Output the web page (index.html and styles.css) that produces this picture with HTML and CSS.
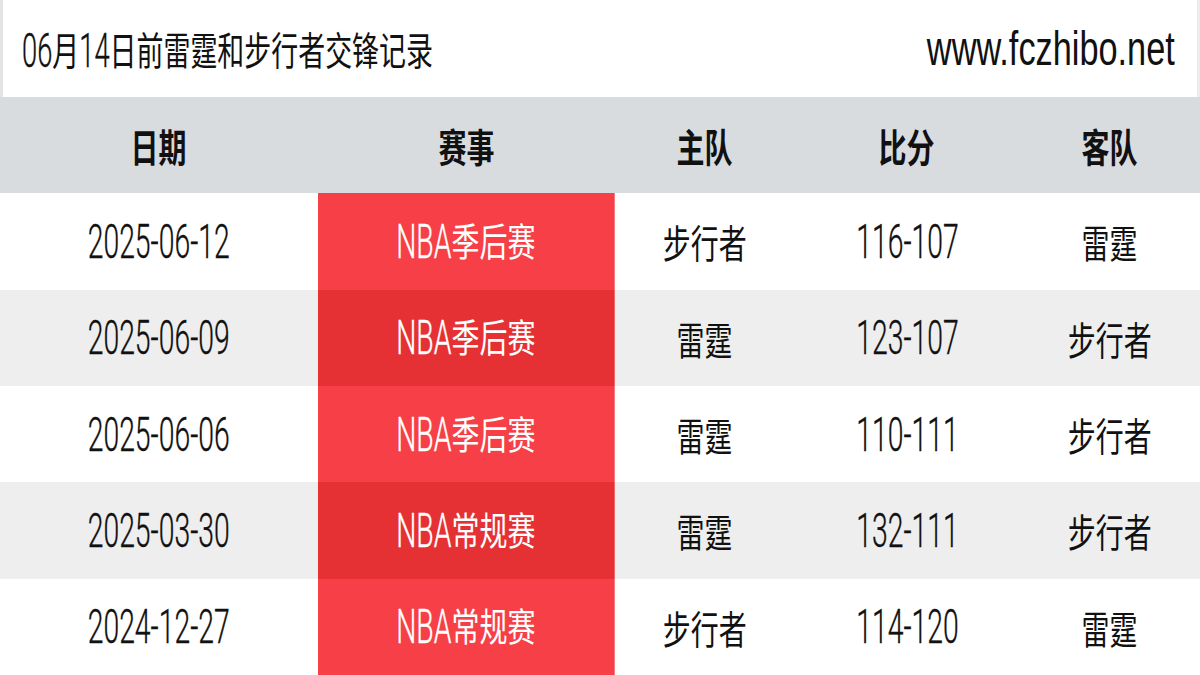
FILE: index.html
```html
<!DOCTYPE html>
<html lang="zh-CN">
<head>
<meta charset="utf-8">
<title>06月14日前雷霆和步行者交锋记录</title>
<link rel="stylesheet" href="styles.css">
</head>
<body>
<div class="page">
  <div class="title-bar">
    <span class="t title"><span class="n">06</span>月<span class="n">14</span>日前雷霆和步行者交锋记录</span>
    <span class="url">www.fczhibo.net</span>
  </div>
  <div class="table">
    <div class="row head">
      <div class="cell"><span class="t">日期</span></div>
      <div class="cell"><span class="t">赛事</span></div>
      <div class="cell"><span class="t">主队</span></div>
      <div class="cell"><span class="t">比分</span></div>
      <div class="cell"><span class="t">客队</span></div>
    </div>
    <div class="row">
      <div class="cell"><span class="t"><span class="n">2025-06-12</span></span></div>
      <div class="cell league"><span class="t"><span class="n">NBA</span>季后赛</span></div>
      <div class="cell"><span class="t">步行者</span></div>
      <div class="cell"><span class="t"><span class="n">116-107</span></span></div>
      <div class="cell"><span class="t">雷霆</span></div>
    </div>
    <div class="row alt">
      <div class="cell"><span class="t"><span class="n">2025-06-09</span></span></div>
      <div class="cell league"><span class="t"><span class="n">NBA</span>季后赛</span></div>
      <div class="cell"><span class="t">雷霆</span></div>
      <div class="cell"><span class="t"><span class="n">123-107</span></span></div>
      <div class="cell"><span class="t">步行者</span></div>
    </div>
    <div class="row">
      <div class="cell"><span class="t"><span class="n">2025-06-06</span></span></div>
      <div class="cell league"><span class="t"><span class="n">NBA</span>季后赛</span></div>
      <div class="cell"><span class="t">雷霆</span></div>
      <div class="cell"><span class="t"><span class="n">110-111</span></span></div>
      <div class="cell"><span class="t">步行者</span></div>
    </div>
    <div class="row alt">
      <div class="cell"><span class="t"><span class="n">2025-03-30</span></span></div>
      <div class="cell league"><span class="t"><span class="n">NBA</span>常规赛</span></div>
      <div class="cell"><span class="t">雷霆</span></div>
      <div class="cell"><span class="t"><span class="n">132-111</span></span></div>
      <div class="cell"><span class="t">步行者</span></div>
    </div>
    <div class="row">
      <div class="cell"><span class="t"><span class="n">2024-12-27</span></span></div>
      <div class="cell league"><span class="t"><span class="n">NBA</span>常规赛</span></div>
      <div class="cell"><span class="t">步行者</span></div>
      <div class="cell"><span class="t"><span class="n">114-120</span></span></div>
      <div class="cell"><span class="t">雷霆</span></div>
    </div>
  </div>
</div>
</body>
</html>
```

FILE: styles.css
```css
* { box-sizing: border-box; }

html, body {
  margin: 0;
  padding: 0;
  background: #ffffff;
}

body {
  font-family: "Noto Sans CJK SC", sans-serif;
  color: #111111;
}

.page {
  width: 1200px;
  height: 675px;
  display: grid;
  grid-template-rows: 97px 1fr;
  overflow: hidden;
}

.title-bar {
  display: flex;
  align-items: center;
  justify-content: space-between;
  padding: 0 22px 0 19px;
  border-left: 3px solid #e4e4e4;
  border-right: 3px solid #ececec;
  background: #ffffff;
}

.t {
  display: inline-block;
  white-space: nowrap;
  font-family: "Noto Sans CJK SC", sans-serif;
  font-size: 38.5px;
  line-height: 1;
  transform: scaleX(0.727);
}

/* latin / digits: narrower, stretched vertically to cap height of CJK */
.n {
  display: inline-block;
  font-family: Roboto, "Liberation Sans", sans-serif;
  font-weight: 300;
  font-size: 39px;
  line-height: 1;
  -webkit-text-stroke: 0.3px currentColor;
  transform: translateY(2px) scaleY(1.226);
  transform-origin: 50% 84%;
}

.title {
  transform: scaleX(0.70);
  transform-origin: left center;
  margin-top: 4px;
}

.url {
  display: inline-block;
  white-space: nowrap;
  font-family: "Liberation Sans", sans-serif;
  font-size: 48px;
  line-height: 1;
  transform: scaleX(0.715);
  transform-origin: right center;
}

.table {
  display: grid;
  grid-template-rows: repeat(6, 1fr);
}

.row {
  display: grid;
  grid-template-columns: 318px 297px 180px 224px 1fr;
  background: #ffffff;
}

.row.alt {
  background: #eeeeef;
}

.row.head {
  background: #d9dcdf;
}

.head .t {
  font-weight: 700;
}

.cell {
  display: flex;
  align-items: center;
  justify-content: center;
}

.league {
  background: #f63f46;
  color: #ffffff;
  border-right: 1px solid #f77b80;
}

.alt .league {
  background: #e53134;
  border-right-color: #ec6a6c;
}
```
